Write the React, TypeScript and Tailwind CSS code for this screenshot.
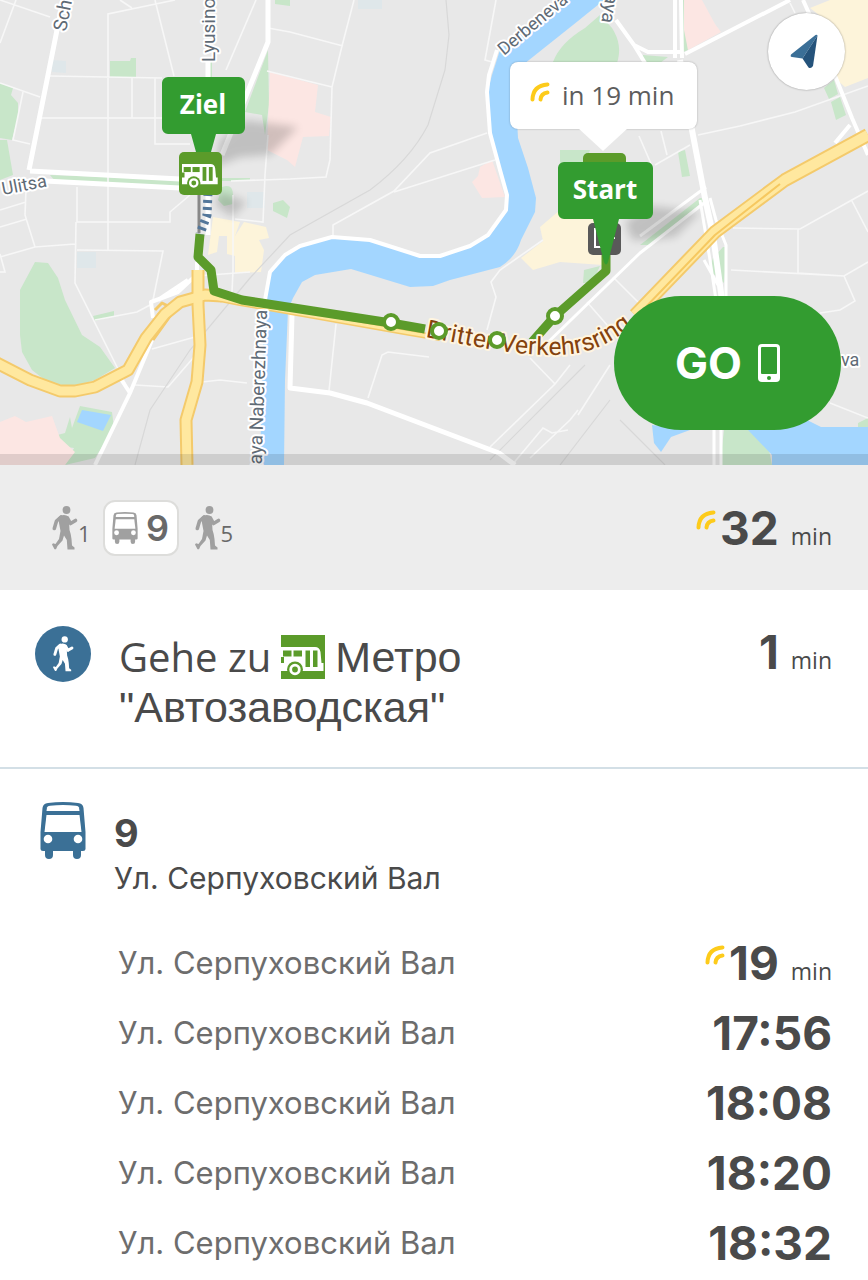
import React from "react";

function WalkIcon({ className }: { className: string }) {
  return (
    <svg viewBox="0 0 26 44" className={className} fill="currentColor" aria-hidden="true">
      <circle cx="14.500" cy="4" r="3.900" />
      <path
        d="M9 11 L4.500 15 L2.300 22.500 M15.500 12 L18.500 17.500 L23.500 14.500"
        fill="none"
        stroke="currentColor"
        strokeWidth="3.600"
        strokeLinecap="round"
        strokeLinejoin="round"
      />
      <path d="M6 11.500 Q10 8 14.500 9.500 Q17 10.500 17 15 L17.500 24 Q19 28 19.500 33 L20 39.500 L22.500 41.500 V43.500 H15.500 L14.800 34 L12 29.500 L10.500 34.500 L5.500 40 L4 43.200 H2.500 L0 38.500 L1 37.300 L3.500 38 L7 33 L8.500 25 Z" />
    </svg>
  );
}

function BusFrontIcon({ className, hole }: { className: string; hole: string }) {
  return (
    <svg viewBox="0 0 46 57" className={className} fill="currentColor" aria-hidden="true">
      <path d="M2.500 6 Q3 1.500 8 1 Q23 -1 38 1 Q43 1.500 43.500 6 L45.500 30 V47 Q45.500 49 43 49 H41 V53 Q41 57 37 57 Q33 57 33 53 V49 H13 V53 Q13 57 9 57 Q5 57 5 53 V49 H3 Q.5 49 .5 47 V30 Z" />
      <path d="M7 5.500 Q7.500 4 10 3.700 Q23 2.500 36 3.700 Q38.500 4 39 5.500 L39.500 9 H6.500 Z" fill={hole} />
      <path d="M6.500 13 H39.500 L41.500 30 H4.500 Z" fill={hole} />
      <circle cx="8" cy="37" r="4.300" fill={hole} />
      <circle cx="38" cy="37" r="4.300" fill={hole} />
    </svg>
  );
}

function LiveIcon({ className }: { className: string }) {
  return (
    <svg viewBox="0 0 20 20" className={className} fill="none" stroke="#fdcb1b" strokeWidth="4" strokeLinecap="round" aria-hidden="true">
      <path d="M2.500 17.500 Q3 3.500 17.500 2.500" />
      <path d="M10.500 17.500 Q11 11.500 17.500 10.500" />
    </svg>
  );
}

function BusSideShape() {
  return (
    <>
      <path d="M0 12 H34 Q38.500 12 39.500 17 L40.500 28 H42.500 V36 H0 V28 H3 V22 H0 Z" fill="#fff" />
      <g fill="#5b9b2a">
        <rect x="2" y="15.500" width="8.500" height="6" />
        <rect x="12.500" y="15.500" width="8.500" height="6" />
        <rect x="24.500" y="15.500" width="4.500" height="16.500" />
        <rect x="32" y="15.500" width="4.500" height="16.500" />
      </g>
      <circle cx="14" cy="34.500" r="8" fill="#5b9b2a" />
      <circle cx="14" cy="34.500" r="4.300" fill="#5b9b2a" stroke="#fff" strokeWidth="2.800" />
    </>
  );
}

function TransitMap() {
  return (
    <svg
      viewBox="0 0 868 465"
      preserveAspectRatio="xMidYMid slice"
      className="block h-[465px] w-full bg-[#e8e8e8]"
      fontFamily="Roboto, 'Liberation Sans', sans-serif"
      role="img"
      aria-label="Karte"
    >
      <defs>
        <filter id="soft" x="-20%" y="-20%" width="140%" height="140%">
          <feGaussianBlur stdDeviation="4" />
        </filter>
        <path id="ring" d="M425 337 C470 345 510 355 550 355 C590 356 612 344 645 316" />
      </defs>

      <g fill="#c8e6c9">
        <path d="M110 61H130L131 58H136V77H110Z M0 83L13 88L11 95L18 103V117L12 140L0 138Z M0 140H7L13 175L0 180Z" />
        <path d="M268 50L269 105L265 135L262 115L245 112Z M275 0H290V6L275 4Z M273 203L283 200L290 207L287 218L273 211Z" />
        <path d="M222 187Q233 183 233 195V204L224 206L218 200Z M212 60V78H209V60Z M220 178H250V181H220Z" />
        <path d="M35 262L48 263L58 278L65 300L82 335L100 347L115 368L95 380L75 386L50 384L32 370L22 352L20 335L20 290Z M93 316L114 311V316L95 321Z" />
        <path d="M80 406L112 412L114 428L95 458L65 465L74 448L52 445L46 438L65 433L70 417L72 428Z" />
        <path d="M553 62Q560 43 585 28L600 15L612 28Q623 45 617 63Z M560 150H590L585 165H560Z" />
        <path d="M680 0H684L688 50L681 53Z M643 55L668 57L660 63H643Z M824 88L834 80L838 94L829 99Z M831 102L840 97L846 115L836 120Z M678 152L685 150L690 176L682 177Z" />
        <path d="M723 247H727L724 283L709 270L713 258Z M724 430H765L772 465H720Z M858 423L868 418V427H858Z M584 270L600 266L592 283H583Z" />
        <path d="M50 175L180 180V187L55 181Z M700 198L640 245L650 245L706 199Z" />
      </g>
      <g fill="#fce6e3">
        <path d="M270 72L318 85L315 112L331 117L329 136L303 137L295 167L287 160L267 150Z" />
        <path d="M480 167L492 160L505 197L482 198L472 182L478 176Z M684 0H702L715 24L721 32L688 50L684 30Z" />
        <path d="M0 422L15 416L26 422L52 416L60 438L75 452L65 465H0Z" />
      </g>
      <g fill="#fdf4da">
        <path d="M213 217L240 222L235 236L244 222L266 227L269 238L259 240L264 250L261 272L235 273V256L227 254V236L219 236L217 252L208 255Z" />
        <path d="M540 227L560 210L610 212L603 265L560 262L533 270L521 258L543 241Z" />
        <path d="M810 8L830 0H868V78L845 87L837 80L830 40L838 30Z" />
      </g>
      <g fill="#dfe7ea">
        <path d="M52 60L66 61V73L52 72Z M358 0H382V9H358Z M77 252H96V268H77Z M247 192H265V208H247Z" />
      </g>

      <g fill="none" stroke="#f7f7f7" strokeWidth="1.600">
        <path d="M0 0L50 17 M16 0L0 43 M108 250V14L175 0 M120 0L132 8 M155 0L174 76 M50 76L162 78 M132 78V118H40 M155 78V144H190 M108 118H162" />
        <path d="M0 83L40 97 M23 92L13 140L30 144 M77 187V222H170V212L190 195 M76 222L75 283L126 385 M26 190L25 215L35 247L75 244 M0 210L26 202 M0 227L27 219 M0 257L35 247 M0 254L5 272H0" />
        <path d="M256 0L226 70 M268 28L290 32L343 46 M354 0L342 46L332 87L330 160L326 177L290 179 M267 71L332 87 M268 135L265 175L263 222L235 219 M231 181L290 179 M233 195V270L232 292" />
        <path d="M496 0L485 60L492 62 M487 133L430 153L394 191L333 225V238 M495 160L394 192 M77 250L163 251L153 300 M95 320L137 312L150 305 M152 349L195 337 M135 385L168 387L200 350 M202 382L220 380L247 383 M196 276L250 272" />
        <path d="M698 135L740 126L795 112L868 86 M655 165L690 145 M639 136L652 166 M661 131L667 155 M733 228L800 229L868 191 M798 229V273L844 276L868 262 M731 270L844 276L855 301L840 310L820 313 M852 201L868 232 M790 3L795 13 M613 277L640 304 M587 302L614 333" />
        <path d="M336 324L329 391 M368 398L382 355L388 352L429 357 M487 330L496 297L491 282L500 270L543 240 M530 358L555 384L490 447 M512 465L543 428L552 433L568 430 M530 458L570 420L578 410 M555 384L570 365 M830 403L868 418 M578 415L610 365" />
      </g>
      <g fill="none" stroke="#d8d8d8" strokeWidth="1.200">
        <path d="M446 0L449 35L445 70L428 125Q410 160 370 190L290 235L250 278L190 350L150 410L135 465 M560 465L610 400 M490 460L585 365 M620 420L665 465" />
      </g>

      <path
        fill="#a3d6ff"
        d="M560 0L525 27L500 50L492 75L488 90L490 130L497 160L507 190V210L490 235L470 247L440 256H420L370 241L332 237L300 246L285 256L270 272L264 300L260 465H284L285 380L288 310L293 298L302 282L315 275L351 269L410 287L433 286L450 280L500 267Q516 257 521 240L535 212L536 198L528 168L518 138L517 120L524 64L578 21L604 0Z"
      />
      <path fill="#a3d6ff" d="M82 410L111 415L103 431L77 422Z M748 430L805 419L821 427H868V465H772V455Z M652 425L690 430L671 437L661 452L654 443Z" />

      <g fill="none" stroke="#fff" strokeLinejoin="round">
        <path strokeWidth="5" d="M63 0L29 170 M30 171L180 179 M45 181L180 188 M208 60V235 M268 0V42L222 155" />
        <path strokeWidth="4" d="M497 50L489 75L487 92L490 133L500 170L507 195L506 210L488 235L470 246L440 256H420L370 240L332 237L300 246L285 255L270 272L265 300" />
        <path strokeWidth="5" d="M292 315L290 388L330 393L367 403L499 453L515 465" />
        <path strokeWidth="4" d="M152 340L130 393L95 465 M115 370L130 393 M153 318L151 302L178 292L193 278 M158 300L188 280 M197 262V282" />
        <path strokeWidth="4" d="M675 0V58 M681 0L682 58 M685 54L790 0 M616 20L634 45L645 63 M634 45L648 52H680 M803 0L812 20L838 83L852 118L868 155 M835 143L850 125" />
        <path strokeWidth="6" d="M680 60L692 130L705 198L713 235L722 300" />
        <path strokeWidth="3" d="M710 198L716 220L726 245V300 M700 200L710 260L716 300 M704 260L718 285 M706 187L640 236 M708 200L640 253L540 350 M714 425V465 M721 425V465" />
      </g>

      <g fill="none" strokeLinejoin="round">
        <g stroke="#f4ca6b">
          <path strokeWidth="14" d="M868 135L785 180L715 232L635 315" />
          <path strokeWidth="13" d="M-5 362L30 380L60 391H75L95 387L128 370L146 338L165 314L180 302L205 295L222 296" />
          <path strokeWidth="13" d="M198 270V305L200 345L197 382L186 420L187 465" />
          <path strokeWidth="6" d="M210 297L240 303L410 333L440 338" />
          <path strokeWidth="3" d="M155 310L162 303L170 307L158 315 M153 340L178 305" />
        </g>
        <g stroke="#ffe89f">
          <path strokeWidth="10" d="M868 135L785 180L715 232L635 315" />
          <path strokeWidth="9" d="M-5 362L30 380L60 391H75L95 387L128 370L146 338L165 314L180 302L205 295L222 296" />
          <path strokeWidth="9" d="M198 270V305L200 345L197 382L186 420L187 465" />
          <path strokeWidth="3" d="M210 297L240 303L410 333L440 338" />
        </g>
        <path stroke="#f6c860" strokeWidth="2" d="M780 184L715 235L640 313" />
      </g>

      <g fill="#000" opacity=".17" filter="url(#soft)">
        <path d="M220 140L245 120L298 127L270 155L240 157L215 167Z" />
        <path d="M625 222L650 206L700 212L675 237L655 239L632 240Z" />
        <path d="M215 205L220 192L247 202L232 217Z" />
      </g>

      <g fill="none" stroke="#5b9b2a" strokeWidth="9" strokeLinejoin="round">
        <path d="M200 234L198 257L211 270L214 291L242 300L391 323L425 329" />
        <path d="M532 342L555 316L606 271V250" />
      </g>
      <path d="M199 193V233" stroke="#888" strokeWidth="3" />
      <path d="M208 193L207 215L200 234" fill="none" stroke="#54779a" strokeWidth="9" strokeDasharray="3 4" />

      <g fill="#5f6b76" stroke="#fff" strokeWidth="4" paintOrder="stroke" strokeLinejoin="round" fontSize="19">
        <text transform="translate(66 32) rotate(-79)">Sch</text>
        <text transform="translate(215 62) rotate(-90)">Lyusino</text>
        <text transform="translate(3 195) rotate(-11)" fontSize="18">Ulitsa</text>
        <text transform="translate(504 56) rotate(-40)" fontSize="18">Derbeneva</text>
        <text transform="translate(606 -7) rotate(99)">aya</text>
        <text transform="translate(261 484) rotate(-88)">skaya Naberezhnaya</text>
        <text x="841" y="366" fontSize="18">va</text>
      </g>
      <text fill="#84420d" stroke="#fff5e0" strokeWidth="4" paintOrder="stroke" strokeLinejoin="round" fontSize="25">
        <textPath href="#ring">Dritter Verkehrsring</textPath>
      </text>

      <g fill="#fff" stroke="#5b9b2a" strokeWidth="4">
        <circle cx="391" cy="322" r="7" />
        <circle cx="439" cy="331" r="7" />
        <circle cx="497" cy="340" r="7" />
        <circle cx="555" cy="316" r="7" />
      </g>

      <rect x="583" y="153" width="43" height="40" rx="5" fill="#5b9b2a" />
      <rect x="588" y="223" width="33" height="32" rx="5" fill="#595959" />
      <path d="M609 229H595V247H609 M603 238H615" fill="none" stroke="#fff" strokeWidth="2" />
      <g transform="translate(179 152)">
        <rect width="43" height="43" rx="5" fill="#5b9b2a" />
        <g transform="translate(3 2) scale(.84)">
          <BusSideShape />
        </g>
      </g>

      <g fill="#339c30">
        <path d="M168 77H239A6 6 0 0 1 245 83V128A6 6 0 0 1 239 134H216L211 152H196L191 134H168A6 6 0 0 1 162 128V83A6 6 0 0 1 168 77Z" />
        <path d="M564 162H647A6 6 0 0 1 653 168V213A6 6 0 0 1 647 219H619L608 262Q606 267 604 262L593 219H564A6 6 0 0 1 558 213V168A6 6 0 0 1 564 162Z" />
      </g>
      <g fill="#fff" fontFamily="'Open Sans', sans-serif" fontWeight="700" fontSize="26" textAnchor="middle">
        <text x="203" y="114">Ziel</text>
        <text x="605" y="199">Start</text>
      </g>
      <rect y="454" width="868" height="11" fill="#000" opacity=".11" />
    </svg>
  );
}

const departures = ["17:56", "18:08", "18:20", "18:32"];
const stopName = "Ул. Серпуховский Вал";

function Departure({ children }: { children: React.ReactNode }) {
  return (
    <li className="flex h-[70px] items-center justify-between">
      <span className="text-[31px] leading-10 text-[#6d6d6d]">{stopName}</span>
      {children}
    </li>
  );
}

function Minutes({ value, live }: { value: number; live?: boolean }) {
  return (
    <span className="flex items-baseline text-[#4a4a4a]">
      {live && <LiveIcon className="mt-2 mr-1 h-5 w-5 self-start" />}
      <span className="text-[46px] leading-[52px] font-bold">{value}</span>
      <span className="ml-3 font-['Open_Sans'] text-[23px]">min</span>
    </span>
  );
}

export default function App() {
  return (
    <main className="min-h-screen bg-white font-['Inter',sans-serif] text-[#4a4a4a]">
      <section className="relative overflow-hidden">
        <TransitMap />
        <div className="absolute top-[62px] left-[510px] flex h-[67px] w-[187px] items-center rounded-lg bg-white pl-5 shadow-[0_0_2px_rgba(0,0,0,0.3)]">
          <LiveIcon className="mb-2 h-5 w-5" />
          <span className="ml-3 font-['Open_Sans'] text-[26px] text-[#5d5d5d]">in 19 min</span>
          <svg viewBox="0 0 50 24" className="absolute top-[66px] left-[68px] h-6 w-[50px]" aria-hidden="true">
            <path d="M0 0H50L25 23Z" fill="#fff" />
          </svg>
        </div>
        <button aria-label="Standort" className="absolute top-[13px] right-[23px] flex h-[77px] w-[77px] items-center justify-center rounded-full bg-white shadow-[0_0_2px_rgba(0,0,0,0.4)]">
          <svg viewBox="0 0 34 36" className="h-9 w-[34px]" aria-hidden="true">
            <path d="M27.500 1.500Q27 .5 25.500 1L1 20.500Q0 23 2 23L12.500 24.500Z" fill="#3b6f97" />
            <path d="M27.500 1.500L23 32Q21 35 18.500 33.500L12.500 24.500Z" fill="#25537b" />
          </svg>
        </button>
        <button className="absolute right-[27px] bottom-[35px] flex h-[134px] w-[227px] items-center justify-center gap-4 rounded-full bg-[#339c30] text-white">
          <span className="text-[44px] leading-none font-bold">GO</span>
          <svg viewBox="0 0 22 38" className="h-[38px] w-[22px]" aria-hidden="true">
            <rect width="22" height="38" rx="4" fill="#fff" />
            <rect x="3" y="3" width="16" height="27" rx="1" fill="#339c30" />
            <circle cx="11" cy="34" r="2" fill="#339c30" />
          </svg>
        </button>
      </section>

      <section className="flex h-[125px] items-center justify-between bg-[#ededed] pr-9 pl-[52px]">
        <div className="flex items-center text-[#696969]">
          <WalkIcon className="h-[44px] w-[26px] text-[#a0a0a0]" />
          <span className="mt-3 font-['Open_Sans'] text-[22px]">1</span>
          <span className="mr-4 ml-3 flex h-[56px] w-[76px] items-center justify-center gap-2 rounded-xl border-2 border-[#dddddb] bg-white">
            <BusFrontIcon className="h-8 w-[26px] text-[#a0a0a0]" hole="#fff" />
            <span className="text-[36px] leading-none font-semibold">9</span>
          </span>
          <WalkIcon className="h-[44px] w-[26px] text-[#a0a0a0]" />
          <span className="mt-3 font-['Open_Sans'] text-[22px]">5</span>
        </div>
        <Minutes value={32} live />
      </section>

      <section className="flex h-[179px] items-start border-b-2 border-[#d3dfe6] pt-9 pr-9 pl-[35px]">
        <span className="flex h-[56px] w-[56px] shrink-0 items-center justify-center rounded-full bg-[#3b7096] text-white">
          <WalkIcon className="h-9 w-[21px]" />
        </span>
        <h2 className="ml-7 w-[380px] pt-1.5 font-['Liberation_Sans'] text-[43px] leading-[50px]">
          <span className="flex items-center gap-2.5">
            <span className="font-['Open_Sans'] text-[40px]">Gehe zu</span>
            <svg viewBox="0 0 44 44" className="h-11 w-11" aria-hidden="true">
              <rect width="44" height="44" fill="#5b9b2a" />
              <BusSideShape />
            </svg>
            <span>Метро</span>
          </span>
          <span className="block">"Автозаводская"</span>
        </h2>
        <div className="ml-auto">
          <Minutes value={1} />
        </div>
      </section>

      <section className="pt-[33px] pr-9 pl-10">
        <header className="flex items-start">
          <BusFrontIcon className="h-[57px] w-[46px] text-[#3b7096]" hole="#fff" />
          <div className="ml-7">
            <h2 className="mt-1.5 text-[38px] leading-[50px] font-bold">9</h2>
            <p className="text-[30px] leading-10">{stopName}</p>
          </div>
        </header>
        <ul className="mt-[30px] pl-[78px]">
          <Departure>
            <Minutes value={19} live />
          </Departure>
          {departures.map((time) => (
            <Departure key={time}>
              <time className="text-[46px] leading-none font-bold">{time}</time>
            </Departure>
          ))}
        </ul>
      </section>
    </main>
  );
}
